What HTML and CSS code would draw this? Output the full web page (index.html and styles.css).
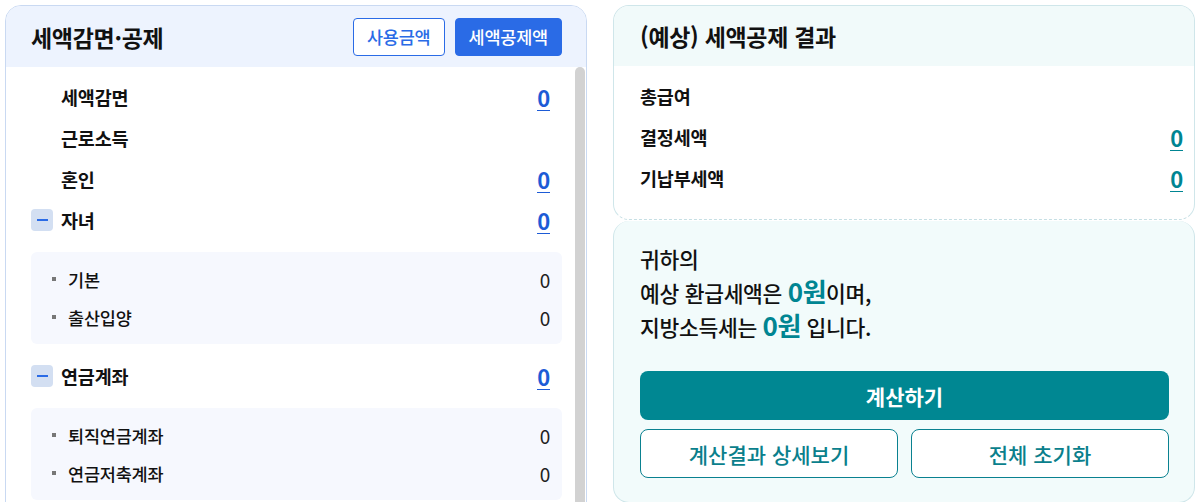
FILE: index.html
```html
<!DOCTYPE html>
<html lang="ko">
<head>
<meta charset="utf-8">
<title>세액감면·공제</title>
<link rel="stylesheet" href="styles.css">
</head>
<body>
<div class="page">
  <section class="panel">
    <header class="panel-head">
      <h2 class="title">세액감면·공제</h2>
      <div class="tabs">
        <button class="tab">사용금액</button>
        <button class="tab active">세액공제액</button>
      </div>
    </header>
    <div class="panel-body">
      <div class="panel-content">
        <div class="row indent"><span class="label">세액감면</span><span class="val">0</span></div>
        <div class="row indent"><span class="label">근로소득</span></div>
        <div class="row indent"><span class="label">혼인</span><span class="val">0</span></div>
        <div class="row"><span class="toggle"><span class="minus"></span></span><span class="label">자녀</span><span class="val">0</span></div>
        <ul class="sub">
          <li class="sub-item"><span class="dot"></span><span class="sub-label">기본</span><span class="sub-val">0</span></li>
          <li class="sub-item"><span class="dot"></span><span class="sub-label">출산입양</span><span class="sub-val">0</span></li>
        </ul>
        <div class="row"><span class="toggle"><span class="minus"></span></span><span class="label">연금계좌</span><span class="val">0</span></div>
        <ul class="sub">
          <li class="sub-item"><span class="dot"></span><span class="sub-label">퇴직연금계좌</span><span class="sub-val">0</span></li>
          <li class="sub-item"><span class="dot"></span><span class="sub-label">연금저축계좌</span><span class="sub-val">0</span></li>
        </ul>
      </div>
      <div class="scroll-track"><div class="scroll-thumb"></div></div>
    </div>
  </section>

  <section class="result">
    <div class="card card-top">
      <header class="card-head">
        <h2 class="title">(예상) 세액공제 결과</h2>
      </header>
      <div class="card-body">
        <div class="rrow"><span class="label">총급여</span></div>
        <div class="rrow"><span class="label">결정세액</span><span class="tval">0</span></div>
        <div class="rrow"><span class="label">기납부세액</span><span class="tval">0</span></div>
      </div>
    </div>
    <div class="card card-bottom">
      <p class="summary">귀하의<br>예상 환급세액은 <strong class="hl">0원</strong>이며,<br>지방소득세는 <strong class="hl">0원</strong> 입니다.</p>
      <button class="btn-main">계산하기</button>
      <div class="btn-row">
        <button class="btn-line">계산결과 상세보기</button>
        <button class="btn-line">전체 초기화</button>
      </div>
    </div>
  </section>
</div>
</body>
</html>
```
FILE: styles.css
```css
* { box-sizing: border-box; }
html, body { margin: 0; padding: 0; background: #fff; }
body {
  font-family: "Noto Sans CJK KR", "Noto Sans", sans-serif;
  color: #111;
  overflow: hidden;
  height: 502px;
}
.page {
  display: grid;
  grid-template-columns: 582px 582px;
  gap: 26px;
  padding: 5px 0 0 5px;
}
.title {
  margin: 0;
  font-size: 23px;
  font-weight: 700;
  letter-spacing: -0.3px;
  color: #111;
}

/* left panel */
.panel {
  border: 1px solid #c9d9f2;
  border-radius: 16px 16px 0 0;
  height: 540px;
  display: flex;
  flex-direction: column;
  overflow: hidden;
}
.panel-head {
  background: #edf3fe;
  height: 61px;
  display: flex;
  align-items: center;
  justify-content: space-between;
  padding: 0 24px 0 25px;
  flex: none;
}
.tabs { display: flex; gap: 10px; }
.tab {
  font-family: inherit;
  height: 38px;
  padding: 0 13px;
  font-size: 17.5px;
  font-weight: 500;
  border: 1px solid #2a6be6;
  border-radius: 4px;
  background: #fff;
  color: #2a6be6;
  letter-spacing: -0.2px;
}
.tab.active { background: #2a6be6; color: #fff; padding: 0 13px; }

.panel-body {
  flex: 1;
  display: flex;
  overflow: hidden;
}
.panel-content {
  flex: 1;
  padding: 9px 13px 0 25px;
}
.scroll-track {
  width: 10px;
  margin-right: 1px;
  background: #fff;
}
.scroll-thumb {
  height: 600px;
  background: #d2d2d2;
  border-radius: 5px;
}

.row {
  display: flex;
  align-items: center;
  height: 41px;
  font-size: 18.5px;
  font-weight: 700;
  padding-right: 12px;
  letter-spacing: -0.2px;
}
.row.indent { padding-left: 30px; }
.row .label { flex: 1; }
.toggle {
  width: 22px;
  height: 22px;
  border-radius: 4px;
  background: #d3dff2;
  display: flex;
  align-items: center;
  justify-content: center;
  margin-right: 8px;
}
.minus { width: 11px; height: 2px; background: #2a6be6; }
.val {
  color: #1d5bd6;
  font-size: 22px;
  font-weight: 700;
  line-height: 24px;
  border-bottom: 1px solid #1d5bd6;
  padding-bottom: 1px;
  margin-top: 2px;
}

.sub {
  list-style: none;
  margin: 12px 0 11px;
  padding: 8px 12px 8px 21px;
  background: #f6f8fe;
  border-radius: 6px;
}
.sub-item {
  display: flex;
  align-items: center;
  height: 38px;
  font-size: 17.5px;
  font-weight: 500;
  letter-spacing: -0.2px;
}
.dot { width: 4px; height: 4px; background: #777; margin-right: 12px; }
.sub-label { flex: 1; }
.sub-val { font-size: 19px; font-weight: 400; color: #222; }

/* right */
.result { display: flex; flex-direction: column; }
.card { border: 1px solid #cfe6ea; border-radius: 16px; }
.card-top {
  border-bottom: 1px dashed #c6dfe4;
  overflow: hidden;
  background: #fff;
}
.card-head {
  background: #f1fafa;
  height: 60px;
  display: flex;
  align-items: center;
  padding: 0 26px;
}
.card-body { padding: 9px 11px 21px 26px; }
.rrow {
  display: flex;
  align-items: center;
  height: 41px;
  font-size: 18.5px;
  font-weight: 700;
  letter-spacing: -0.2px;
}
.rrow .label { flex: 1; }
.tval {
  color: #008592;
  font-size: 22px;
  font-weight: 700;
  line-height: 24px;
  border-bottom: 1px solid #008592;
  padding-bottom: 1px;
  margin-top: 2px;
}
.card-bottom {
  margin-top: 1px;
  background: #f2fbfb;
  border-top: none;
  padding: 21px 25px 21px 26px;
  height: 282px;
}
.summary {
  margin: 0 0 27px;
  font-size: 21.5px;
  font-weight: 500;
  line-height: 34px;
  letter-spacing: -0.3px;
}
.hl { color: #008592; font-size: 26px; font-weight: 700; letter-spacing: -0.5px; line-height: 1; }
.btn-main {
  display: block;
  width: 100%;
  height: 49px;
  border: none;
  border-radius: 8px;
  background: #008792;
  color: #fff;
  font-family: inherit;
  font-size: 21px;
  font-weight: 700;
}
.btn-row {
  display: grid;
  grid-template-columns: 1fr 1fr;
  gap: 13px;
  margin-top: 9px;
}
.btn-line {
  height: 49px;
  border: 1px solid #0a8190;
  border-radius: 8px;
  background: #fff;
  color: #0a7f8c;
  font-family: inherit;
  font-size: 21px;
  font-weight: 500;
}
```
